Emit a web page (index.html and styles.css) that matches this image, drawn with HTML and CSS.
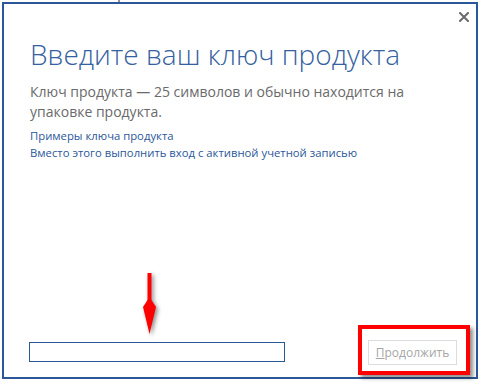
FILE: index.html
```html
<!DOCTYPE html>
<html lang="ru">
<head>
<meta charset="utf-8">
<link rel="stylesheet" href="styles.css">
</head>
<body>
<div class="bgline"></div>
<div class="dialog">
  <div class="topbar">
    <button class="close" aria-label="Закрыть">
      <svg width="10" height="10" viewBox="0 0 10 10"><path d="M1 1L9 9M9 1L1 9" stroke="#6b6b6b" stroke-width="2" stroke-linecap="square"/></svg>
    </button>
  </div>
  <h1 class="title">Введите ваш ключ продукта</h1>
  <p class="desc">Ключ продукта — 25 символов и обычно находится на упаковке продукта.</p>
  <div class="links">
    <a class="link" href="#">Примеры ключа продукта</a>
    <a class="link" href="#">Вместо этого выполнить вход с активной учетной записью</a>
  </div>
  <div class="spacer"></div>
  <div class="bottom">
    <div class="field-wrap">
      <svg class="arrow" width="14" height="61" viewBox="0 0 14 61">
        <rect x="4.5" y="0" width="4" height="30" fill="#ff0000"/>
        <polygon points="0,34 6.5,24 13,34 6.5,61" fill="#ff0000"/>
      </svg>
      <input class="field" type="text">
    </div>
    <div class="btn-wrap">
      <button class="btn" disabled><u>П</u>родолжить</button>
      <div class="frame"></div>
    </div>
  </div>
</div>
</body>
</html>
```
FILE: styles.css
```css
html, body {
  margin: 0;
  padding: 0;
  background: #ffffff;
}
body {
  width: 480px;
  height: 382px;
  position: relative;
  overflow: hidden;
  font-family: "Open Sans", "Noto Sans", "DejaVu Sans", sans-serif;
}
.bgline {
  position: absolute;
  left: 118px;
  top: 0;
  width: 2px;
  height: 2px;
  background: linear-gradient(to right, #d88a7a, #6a8cc0);
}
.dialog {
  box-sizing: border-box;
  margin: 2px 0 0 2px;
  width: 476px;
  height: 377px;
  border: 2px solid #2b579a;
  background: #fff;
  display: flex;
  flex-direction: column;
  padding: 0 0 12px 25px;
}
.topbar {
  display: flex;
  justify-content: flex-end;
  height: 24px;
  padding-right: 7px;
}
.close {
  border: 0;
  background: none;
  padding: 0;
  margin-top: 8px;
  width: 10px;
  height: 10px;
  display: flex;
}
.title {
  margin: 8px 0 0 1px;
  font-weight: 300;
  font-size: 28px;
  line-height: 36px;
  color: #3561a0;
  letter-spacing: 0;
}
.desc {
  margin: 10px 0 0 1px;
  width: 400px;
  font-size: 14px;
  line-height: 20px;
  color: #6a6a6a;
}
.links {
  margin: 5px 0 0 1px;
  display: flex;
  flex-direction: column;
  align-items: flex-start;
}
.link {
  font-size: 11.3px;
  line-height: 17px;
  color: #2b579a;
  text-decoration: none;
}
.spacer {
  flex: 1;
}
.bottom {
  display: flex;
  align-items: flex-end;
  justify-content: space-between;
  padding-right: 19px;
}
.field-wrap {
  position: relative;
}
.field {
  display: block;
  box-sizing: border-box;
  width: 256px;
  height: 20px;
  margin: 0 0 3px 0;
  border: 1px solid #2b579a;
  padding: 0 4px;
  outline: none;
}
.arrow {
  position: absolute;
  left: 114px;
  top: -69px;
  filter: drop-shadow(2px 2px 2px rgba(0,0,0,0.45));
}
.btn-wrap {
  position: relative;
}
.btn {
  display: block;
  box-sizing: border-box;
  width: 89px;
  height: 25px;
  border: 1px solid #dddddd;
  background: #fff;
  color: #a6a6a6;
  font-family: "Open Sans", "Noto Sans", sans-serif;
  font-size: 12px;
  padding: 0;
}
.btn u {
  text-decoration-thickness: 1px;
}
.frame {
  position: absolute;
  box-sizing: border-box;
  left: -10px;
  top: -15px;
  width: 112px;
  height: 50px;
  border: 4px solid #ff0000;
  box-shadow: 3px 3px 4px rgba(0,0,0,0.45);
  pointer-events: none;
}
```
